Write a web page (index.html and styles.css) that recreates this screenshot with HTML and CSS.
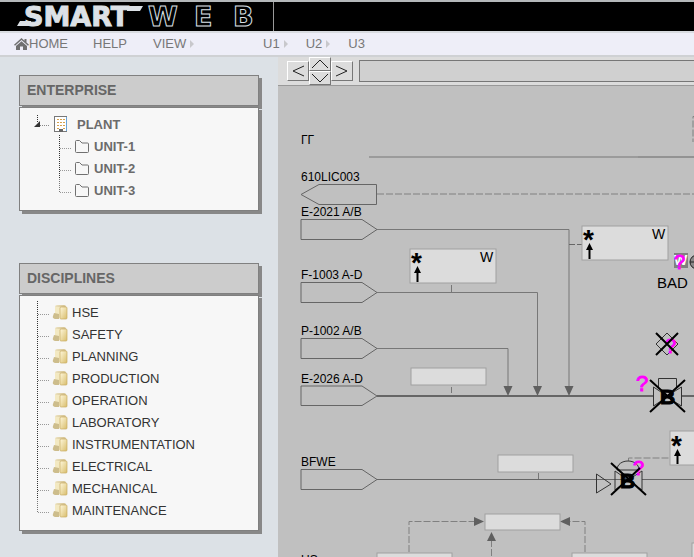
FILE: index.html
```html
<!DOCTYPE html>
<html lang="en">
<head>
<meta charset="utf-8">
<title>SmartWeb</title>
<link rel="stylesheet" href="styles.css">
</head>
<body>
<svg class="defs" aria-hidden="true">
  <defs>
    <linearGradient id="gold" x1="0" y1="0" x2="1" y2="1">
      <stop offset="0" stop-color="#fff8dc"/><stop offset="1" stop-color="#d8bd6c"/>
    </linearGradient>
    <linearGradient id="goldBack" x1="0" y1="0" x2="1" y2="1">
      <stop offset="0" stop-color="#efe6c6"/><stop offset="1" stop-color="#b89b58"/>
    </linearGradient>
    <symbol id="folder" viewBox="0 0 16 16">
      <path d="M1.500 3.500 Q1.500 2.500 2.500 2.500 H5.500 L8 5 H13.500 Q14.500 5 14.500 6 V13.500 Q14.500 14.500 13.500 14.500 H2.500 Q1.500 14.500 1.500 13.500 Z" fill="none" stroke="#707070"/>
    </symbol>
    <symbol id="book" viewBox="0 0 16 16">
      <path d="M3 3 Q3 1 5 1 H12 Q14 1 14 3 V13 H3 Z" fill="url(#goldBack)"/>
      <path d="M3 3 L8 3 V14 L3 12 Z" fill="#f3e9c2"/>
      <path d="M2 9 L7 10 V15 H3 Q0 14 1 12 Z" fill="#cdbd8c"/>
      <rect x="8" y="3" width="7" height="12" rx="1" fill="url(#gold)" stroke="#c9ad62" stroke-width=".7"/>
    </symbol>
    <symbol id="branch" viewBox="0 0 14 22">
      <path d="M1.500 0 V22" stroke="#333" stroke-dasharray="1 1"/><path d="M2 13.500 H13" stroke="#999" stroke-dasharray="1 1"/>
    </symbol>
    <symbol id="branch-end" viewBox="0 0 14 22">
      <path d="M1.500 0 V14" stroke="#777" stroke-dasharray="1 1"/><path d="M2 13.500 H13" stroke="#999" stroke-dasharray="1 1"/>
    </symbol>
    <symbol id="branch-open" viewBox="0 0 16 22">
      <path d="M3.500 2 V10" stroke="#333" stroke-dasharray="1 1"/><path d="M6 12.500 H15" stroke="#888" stroke-dasharray="1 1"/>
      <path d="M6 8 V14 H0 Z" fill="#333"/>
    </symbol>
  </defs>
</svg>

<header class="banner">
  <div class="brand">
    <svg class="logo" width="244" height="26" role="img" aria-label="Smart Web">
      <path d="M0 22 L3 17 H14 V22 Z M110 2 H126 L123 7 H110 Z" fill="#dce1e6"/>
      <text class="logo-solid" x="7" y="22">SMART</text>
      <text class="logo-line" x="131" y="22">W</text>
      <text class="logo-line" x="177" y="22">E</text>
      <text class="logo-line" x="216" y="22">B</text>
    </svg>
  </div>
</header>

<nav class="menu">
  <div class="menu-main">
    <a class="home" href="#"><svg width="15" height="12" viewBox="0 0 15 12" aria-hidden="true"><path d="M7.500 0 L10.500 2.700 V1 H12.500 V4.500 L15 6.700 L14 7.800 L7.500 2 L1 7.800 L0 6.700 Z M7.500 3.200 L13 8 V12 H9 V8.500 H6 V12 H2 V8 Z" fill="#707070"/></svg>HOME</a>
    <a class="help" href="#">HELP</a>
    <a class="more" href="#">VIEW</a>
  </div>
  <div class="menu-units">
    <a class="more" href="#">U1</a>
    <a class="more" href="#">U2</a>
    <a href="#">U3</a>
  </div>
</nav>

<div class="shell">
  <aside class="sidebar">
    <section class="panel">
      <h2>ENTERPRISE</h2>
      <ul class="tree bold">
        <li>
          <a class="root" href="#"><svg width="16" height="22"><use href="#branch-open"/></svg><svg width="14" height="16" viewBox="0 0 14 16"><rect x=".5" y=".5" width="12" height="15" fill="#fff" stroke="#777"/><path d="M12.500 1 V15" stroke="#6aa5d8"/><path d="M3 3.500 H11 M3 6.500 H11 M3 9.500 H11 M3 12.500 H5 M9 12.500 H11" stroke="#d6a24e" stroke-dasharray="2 1"/><path d="M5 16 V13 H9 V16 Z" fill="#666"/></svg><span>PLANT</span></a>
          <ul>
            <li><a href="#"><svg width="14" height="22"><use href="#branch"/></svg><svg width="16" height="16"><use href="#folder"/></svg><span>UNIT-1</span></a></li>
            <li><a href="#"><svg width="14" height="22"><use href="#branch"/></svg><svg width="16" height="16"><use href="#folder"/></svg><span>UNIT-2</span></a></li>
            <li><a href="#"><svg width="14" height="22"><use href="#branch-end"/></svg><svg width="16" height="16"><use href="#folder"/></svg><span>UNIT-3</span></a></li>
          </ul>
        </li>
      </ul>
    </section>
    <section class="panel">
      <h2>DISCIPLINES</h2>
      <ul class="tree flat">
        <li><a href="#"><svg width="14" height="22"><use href="#branch"/></svg><svg width="16" height="16"><use href="#book"/></svg><span>HSE</span></a></li>
        <li><a href="#"><svg width="14" height="22"><use href="#branch"/></svg><svg width="16" height="16"><use href="#book"/></svg><span>SAFETY</span></a></li>
        <li><a href="#"><svg width="14" height="22"><use href="#branch"/></svg><svg width="16" height="16"><use href="#book"/></svg><span>PLANNING</span></a></li>
        <li><a href="#"><svg width="14" height="22"><use href="#branch"/></svg><svg width="16" height="16"><use href="#book"/></svg><span>PRODUCTION</span></a></li>
        <li><a href="#"><svg width="14" height="22"><use href="#branch"/></svg><svg width="16" height="16"><use href="#book"/></svg><span>OPERATION</span></a></li>
        <li><a href="#"><svg width="14" height="22"><use href="#branch"/></svg><svg width="16" height="16"><use href="#book"/></svg><span>LABORATORY</span></a></li>
        <li><a href="#"><svg width="14" height="22"><use href="#branch"/></svg><svg width="16" height="16"><use href="#book"/></svg><span>INSTRUMENTATION</span></a></li>
        <li><a href="#"><svg width="14" height="22"><use href="#branch"/></svg><svg width="16" height="16"><use href="#book"/></svg><span>ELECTRICAL</span></a></li>
        <li><a href="#"><svg width="14" height="22"><use href="#branch"/></svg><svg width="16" height="16"><use href="#book"/></svg><span>MECHANICAL</span></a></li>
        <li><a href="#"><svg width="14" height="22"><use href="#branch-end"/></svg><svg width="16" height="16"><use href="#book"/></svg><span>MAINTENANCE</span></a></li>
      </ul>
    </section>
  </aside>

  <main class="work">
    <div class="toolbar">
      <button type="button" aria-label="Left"><svg width="14" height="14"><path d="M13 2 L2 7 L13 12"/></svg></button>
      <div class="updown">
        <button type="button" aria-label="Up"><svg width="18" height="10"><path d="M1 9 L9 1 L17 9"/></svg></button>
        <button type="button" aria-label="Down"><svg width="18" height="10"><path d="M1 1 L9 9 L17 1"/></svg></button>
      </div>
      <button type="button" aria-label="Right"><svg width="14" height="14"><path d="M1 2 L12 7 L1 12"/></svg></button>
      <input type="text" aria-label="Message">
    </div>
    <div class="canvas">
      <svg class="diagram" role="img" aria-label="Process diagram">
        <g transform="translate(-278 -86)">
          <g class="pipe">
            <path d="M369 157 H638"/><path class="dark" d="M638 157 H1400"/>
            <path d="M377 229.500 H569 V388"/>
            <path d="M377 292.500 H537.500 V388"/>
            <path d="M377 348.500 H508 V388"/>
            <path class="thick" d="M377 396 H653 M682 396 H1400"/>
            <path class="thin" d="M377 479.500 H622 M642 479.500 H1400"/>
            <path d="M451.500 285 V292 M451.500 387 V393 M538.500 473 V479"/>
            <path class="thin" d="M569 244.500 H575 M577 244.500 H582"/>
          </g>
          <g class="signal">
            <path d="M377 194 H1400"/>
            <path d="M1400 116.500 H693 V142"/>
            <path d="M409 552 V521.500 H475"/>
            <path d="M585 552 V521.500 H569"/>
            <path d="M491.500 540 V1000"/>
            <path d="M628.500 461 V458 H669"/>
          </g>
          <g fill="#606060">
            <path d="M503.500 386 H512.500 L508 396 Z M533 386 H542 L537.500 396 Z M564.500 386 H573.500 L569 396 Z"/>
            <path d="M474 517 V526 L484 521.500 Z M570 517 V526 L560 521.500 Z M487 541 H496 L491.500 532 Z"/>
          </g>
          <g class="tag">
            <path d="M376.500 184.500 H319 L301 194.500 L319 204.500 H376.500 Z"/>
            <path d="M301 219.500 H362 L377 229.500 L362 239.500 H301 Z"/>
            <path d="M301 282.500 H362 L377 292.500 L362 302.500 H301 Z"/>
            <path d="M301 338.500 H362 L377 348.500 L362 358.500 H301 Z"/>
            <path d="M301 386 H362 L377 396 L362 405.500 H301 Z"/>
            <path d="M301 469.500 H362 L377 479.500 L362 489.500 H301 Z"/>
          </g>
          <g class="label">
            <text x="301" y="144">ΓΓ</text>
            <text x="301" y="181">610LIC003</text>
            <text x="301" y="216">E-2021 A/B</text>
            <text x="301" y="279">F-1003 A-D</text>
            <text x="301" y="335">P-1002 A/B</text>
            <text x="301" y="383">E-2026 A-D</text>
            <text x="301" y="466">BFWE</text>
            <text x="301" y="564">US</text>
          </g>
          <g class="box">
            <rect x="410" y="249" width="86" height="34"/>
            <rect x="582" y="226" width="86" height="34"/>
            <rect x="670" y="431" width="86" height="34"/>
            <rect x="411" y="368" width="75" height="17"/>
            <rect x="498" y="455" width="75" height="17"/>
            <rect x="485" y="514" width="75" height="16"/>
            <rect x="377" y="553" width="75" height="17"/>
            <rect x="572" y="553" width="75" height="17"/>
            <rect x="692" y="543" width="75" height="17"/>
          </g>
          <g class="star">
            <text x="411" y="272">*</text><text x="583" y="249">*</text><text x="671" y="455">*</text>
          </g>
          <g class="flag">
            <text x="480" y="262">W</text><text x="652" y="239">W</text><text class="bad" x="657" y="288">BAD</text>
          </g>
          <g fill="#000">
            <path d="M417.500 266 L421 273 H418.500 V282 H416.500 V273 H414 Z"/>
            <path d="M589.500 243 L593 250 H590.500 V259 H588.500 V250 H586 Z"/>
            <path d="M677.500 449 L681 456 H678.500 V464 H676.500 V456 H674 Z"/>
          </g>
          <rect x="674" y="253" width="14" height="15" fill="#808080"/>
          <text class="w-icon" x="674" y="265">W</text>
          <circle cx="697" cy="262" r="7" fill="#888" stroke="#222"/><path d="M690 262 H699" stroke="#222"/>
          <g class="part">
            <path d="M667 333 L678 344 L667 355 L656 344 Z"/>
            <path d="M658.500 388 V378.500 H676.500 V388"/>
            <path d="M653.500 387 V406 L667 397 L681.500 406 V387 L667 396 Z"/>
            <path d="M596.500 474 V493 L611 484 Z"/>
            <path d="M617 470 C617 458 639 458 639 470 Z"/>
            <path d="M615 471 L628 480 L642 471 V490 L628 480 L615 490 Z"/>
          </g>
          <g class="query">
            <text class="strong" x="674" y="269">?</text>
            <text class="strong" x="665" y="353">?</text>
            <text x="636" y="391">?</text>
            <text class="strong" x="633" y="475">?</text>
          </g>
          <g class="letter"><text x="660" y="404">B</text><text x="620" y="488">B</text></g>
          <path class="cross" d="M656 333 L678 355 M678 333 L656 355 M650 380 L685 412 M685 380 L650 412 M611 463 L646 495 M640 468 L611 495"/>
        </g>
      </svg>
    </div>
  </main>
</div>
</body>
</html>
```
FILE: styles.css
```css
* { box-sizing: border-box; }
body {
  margin: 0;
  min-height: 100vh;
  display: flex;
  flex-direction: column;
  overflow: hidden;
  background: #dce1e6;
  color: #333;
  font: 13px/22px "Liberation Sans", Arial, sans-serif;
}
a { color: inherit; text-decoration: none; }
ul { list-style: none; margin: 0; padding: 0; }
svg { display: block; flex: none; }
.defs { position: absolute; width: 0; height: 0; }

.banner {
  background: #000;
  border-top: 2px solid #b4b8ba;
  border-bottom: 2px solid #d8dbe0;
  display: flex;
}
.brand {
  width: 274px;
  height: 29px;
  padding: 2px 0 0 17px;
  border-right: 1px solid #999;
}
.logo { overflow: visible; }
.logo-solid { font: bold 27px "DejaVu Sans", sans-serif; fill: #dce1e6; stroke: #dce1e6; stroke-width: 1px; }
.logo-line { font: bold 27px "DejaVu Sans", sans-serif; fill: #000; stroke: #dce1e6; stroke-width: 1px; }

.menu {
  display: flex;
  height: 24px;
  line-height: 22px;
  background: #eeeef8;
  border-bottom: 2px solid #cfd1d4;
  color: #777;
}
.menu-main { display: flex; width: 263px; padding-left: 14px; }
.menu-units { display: flex; gap: 18px; }
.home { display: flex; align-items: center; width: 79px; }
.help { width: 60px; }
.more { display: flex; align-items: center; gap: 4px; }
.more::after {
  content: "";
  border: 4px solid transparent;
  border-left-color: #c8c8cc;
  border-right-width: 0;
}

.shell { flex: 1; display: flex; }
.sidebar {
  flex: none;
  width: 278px;
  padding: 18px 19px 26px;
  display: flex;
  flex-direction: column;
  gap: 52px;
}
.panel { display: flex; flex-direction: column; gap: 1px; }
.panel h2 {
  margin: 0;
  height: 31px;
  padding: 0 7px;
  font-size: 14px;
  line-height: 29px;
  color: #666;
  background: #ccc;
  border: 1px solid #808080;
  box-shadow: 3px 3px 0 #888;
}
.tree {
  position: relative;
  padding: 5px 14px 9px;
  background: #f7f7f7;
  border: 1px solid #808080;
  box-shadow: 3px 3px 0 #888;
}
.tree a { display: flex; align-items: center; height: 22px; gap: 2px; }
.tree a span { padding: 2px 0 0 2px; }
.tree ul { padding-left: 24px; }
.flat { padding-left: 16px; }
.bold { font-weight: bold; color: #6b6b6b; }
.tree .root { gap: 4px; }
.tree .root span { padding-left: 5px; }

.work { flex: 1; min-width: 0; display: flex; flex-direction: column; }
.toolbar {
  display: flex;
  align-items: center;
  height: 29px;
  padding-left: 9px;
  background: #dcdcdc;
  border-bottom: 1px solid #999;
}
.toolbar button {
  display: flex;
  align-items: center;
  justify-content: center;
  width: 22px;
  height: 20px;
  padding: 0;
  background: #dcdcdc;
  border: 1px solid;
  border-color: #fff #777 #777 #fff;
}
.toolbar path { fill: none; stroke: #222; }
.updown button { height: 14px; }
.toolbar input {
  flex: 1;
  min-width: 0;
  height: 22px;
  margin-left: 6px;
  background: #d0d0d0;
  border: 1px solid #777;
  border-right: 0;
}
.canvas { flex: 1; display: flex; background: #c0c0c0; overflow: hidden; }
.diagram { flex: 1; width: 100%; min-width: 0; }

.pipe path { fill: none; stroke: #777; stroke-width: 1px; }
.pipe .dark { stroke: #666; }
.pipe .thick { stroke: #666; stroke-width: 2px; }
.pipe .thin { stroke: #666; }
.signal path { fill: none; stroke: #808080; stroke-width: 1px; stroke-dasharray: 7 2; }
.tag path { fill: none; stroke: #666; }
.label text { font-size: 12px; fill: #000; }
.box rect { fill: #dcdcdc; stroke: #a0a0a0; }
.star text { font-weight: bold; font-size: 28px; fill: #000; }
.flag text { font-size: 14px; fill: #000; }
.flag .bad { font-size: 15px; }
.w-icon { font-weight: bold; font-size: 14px; fill: #fff; }
.part path { fill: none; stroke: #333; }
.query text { font-size: 22px; fill: #f0f; stroke: #f0f; stroke-width: 1px; }
.query .strong { font-size: 20px; }
.letter text { font-weight: bold; font-size: 21px; fill: #000; stroke: #000; stroke-width: 1px; }
.cross { fill: none; stroke: #000; stroke-width: 2px; }
```
